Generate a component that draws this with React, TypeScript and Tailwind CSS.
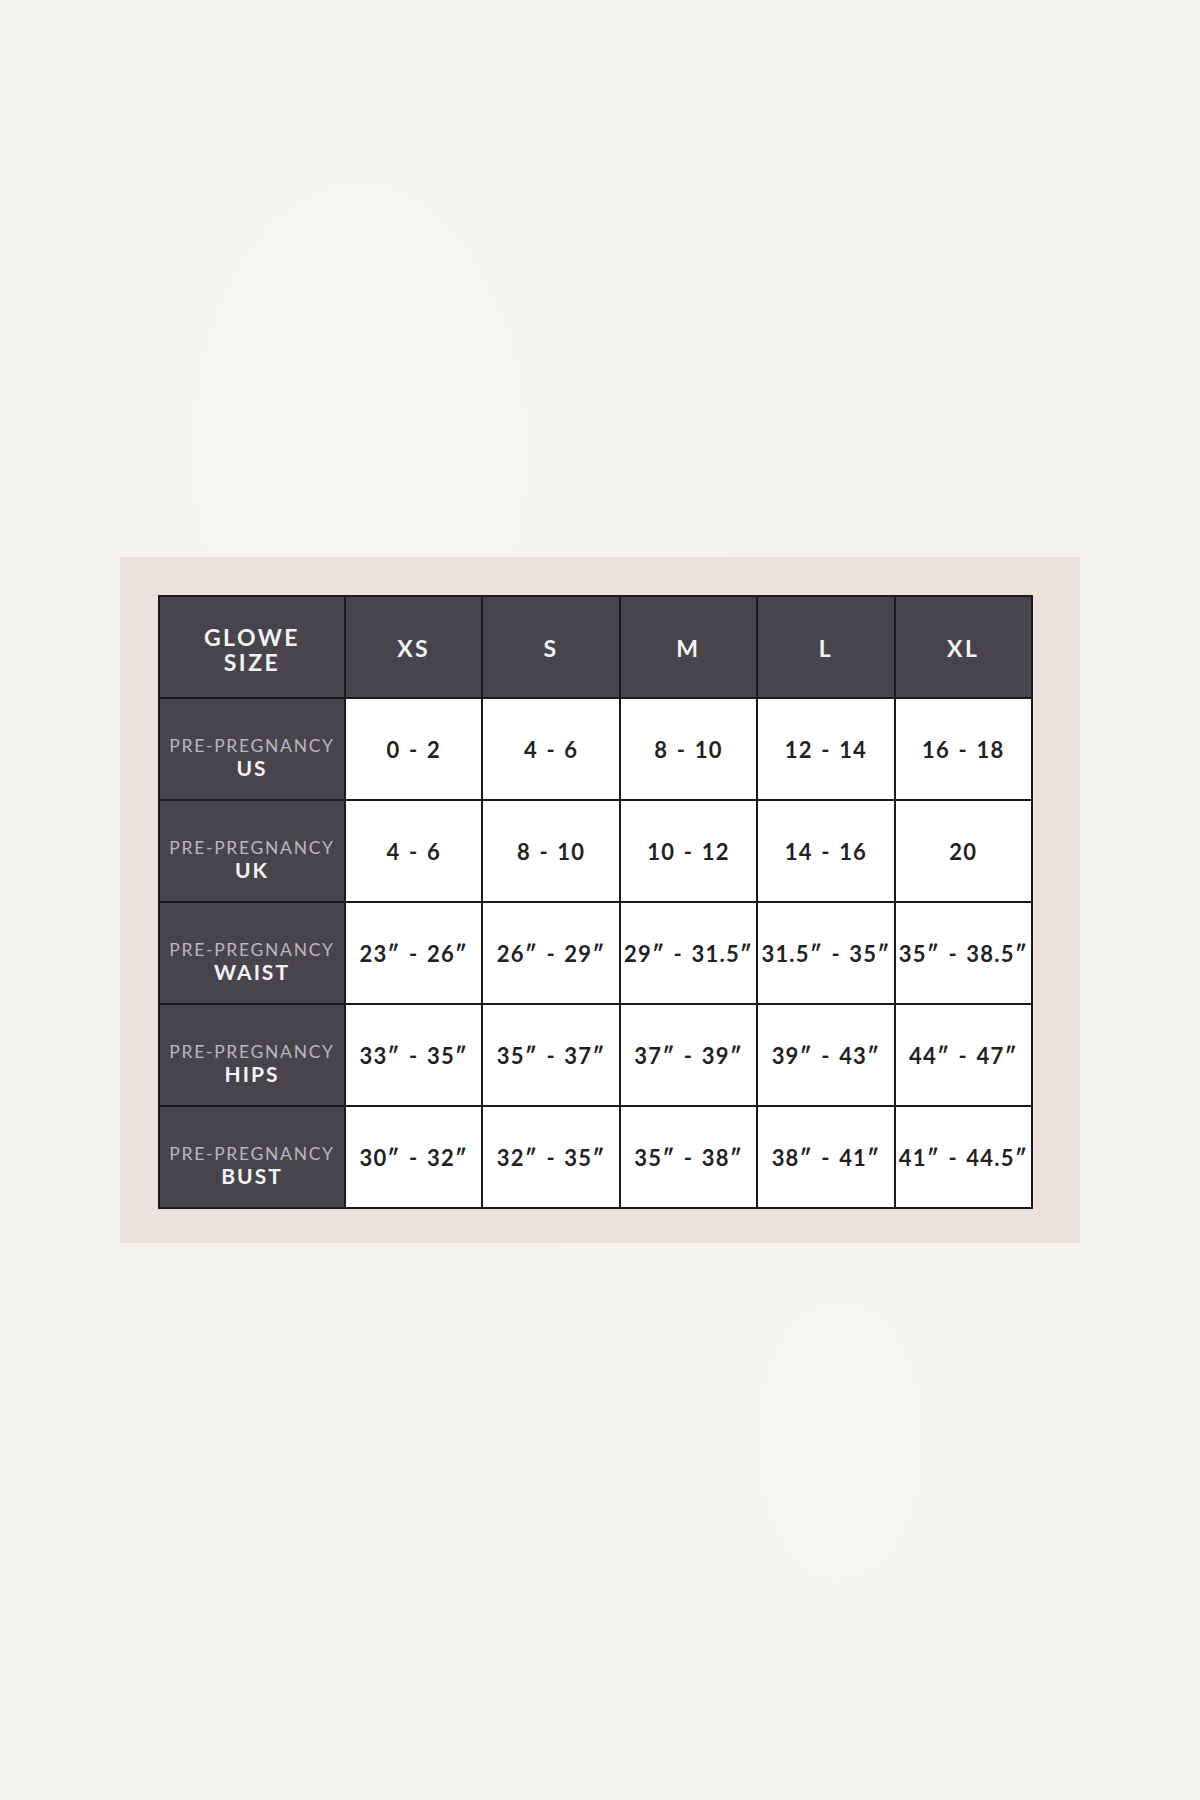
const SIZES = ["XS", "S", "M", "L", "XL"];

const ROWS: { label: string; values: string[] }[] = [
  { label: "US", values: ["0 - 2", "4 - 6", "8 - 10", "12 - 14", "16 - 18"] },
  { label: "UK", values: ["4 - 6", "8 - 10", "10 - 12", "14 - 16", "20"] },
  { label: "WAIST", values: ["23″ - 26″", "26″ - 29″", "29″ - 31.5″", "31.5″ - 35″", "35″ - 38.5″"] },
  { label: "HIPS", values: ["33″ - 35″", "35″ - 37″", "37″ - 39″", "39″ - 43″", "44″ - 47″"] },
  { label: "BUST", values: ["30″ - 32″", "32″ - 35″", "35″ - 38″", "38″ - 41″", "41″ - 44.5″"] },
];

const font = "font-['Lato','Liberation_Sans',sans-serif]";

export default function App() {
  return (
    <div
      className={`flex h-[1800px] w-full items-center justify-center bg-[#f2f0ed] bg-[radial-gradient(ellipse_at_30%_25%,#f7f6f3_0%,transparent_45%),radial-gradient(ellipse_at_70%_80%,#f6f5f2_0%,transparent_40%)] ${font}`}
    >
      <div className="flex h-[686px] w-[960px] bg-[#ede1de] pb-[34px] pl-[38px] pr-[47px] pt-[38px]">
        <div className="grid h-[614px] w-[875px] grid-cols-[184px_repeat(5,1fr)] grid-rows-[repeat(6,1fr)] gap-[2px] bg-[#1c1a1d] p-[2px]">
          <div className="flex flex-col items-center justify-center bg-[#48444c] pt-[6px] text-[23px] font-bold leading-[25px] tracking-[2.5px] text-[#f4f3f5]">
            <span>GLOWE</span>
            <span>SIZE</span>
          </div>
          {SIZES.map((s) => (
            <div
              key={s}
              className="flex items-center justify-center bg-[#48444c] pt-[2px] text-[23px] font-bold tracking-[2.5px] text-[#f4f3f5]"
            >
              {s}
            </div>
          ))}
          {ROWS.map((row) => (
            <>
              <div
                key={row.label}
                className="flex flex-col items-center justify-center bg-[#48444c] pt-[16px]"
              >
                <span className="text-[17.5px] leading-[22px] tracking-[1.7px] text-[#b9b6bc]">
                  PRE-PREGNANCY
                </span>
                <span className="text-[21px] font-bold leading-[22px] tracking-[2px] text-[#f4f3f5]">
                  {row.label}
                </span>
              </div>
              {row.values.map((v, i) => (
                <div
                  key={row.label + i}
                  className="flex items-center justify-center whitespace-nowrap bg-white text-[22px] font-bold tracking-[1.2px] text-[#231f22] [word-spacing:2px]"
                >
                  {v}
                </div>
              ))}
            </>
          ))}
        </div>
      </div>
    </div>
  );
}
